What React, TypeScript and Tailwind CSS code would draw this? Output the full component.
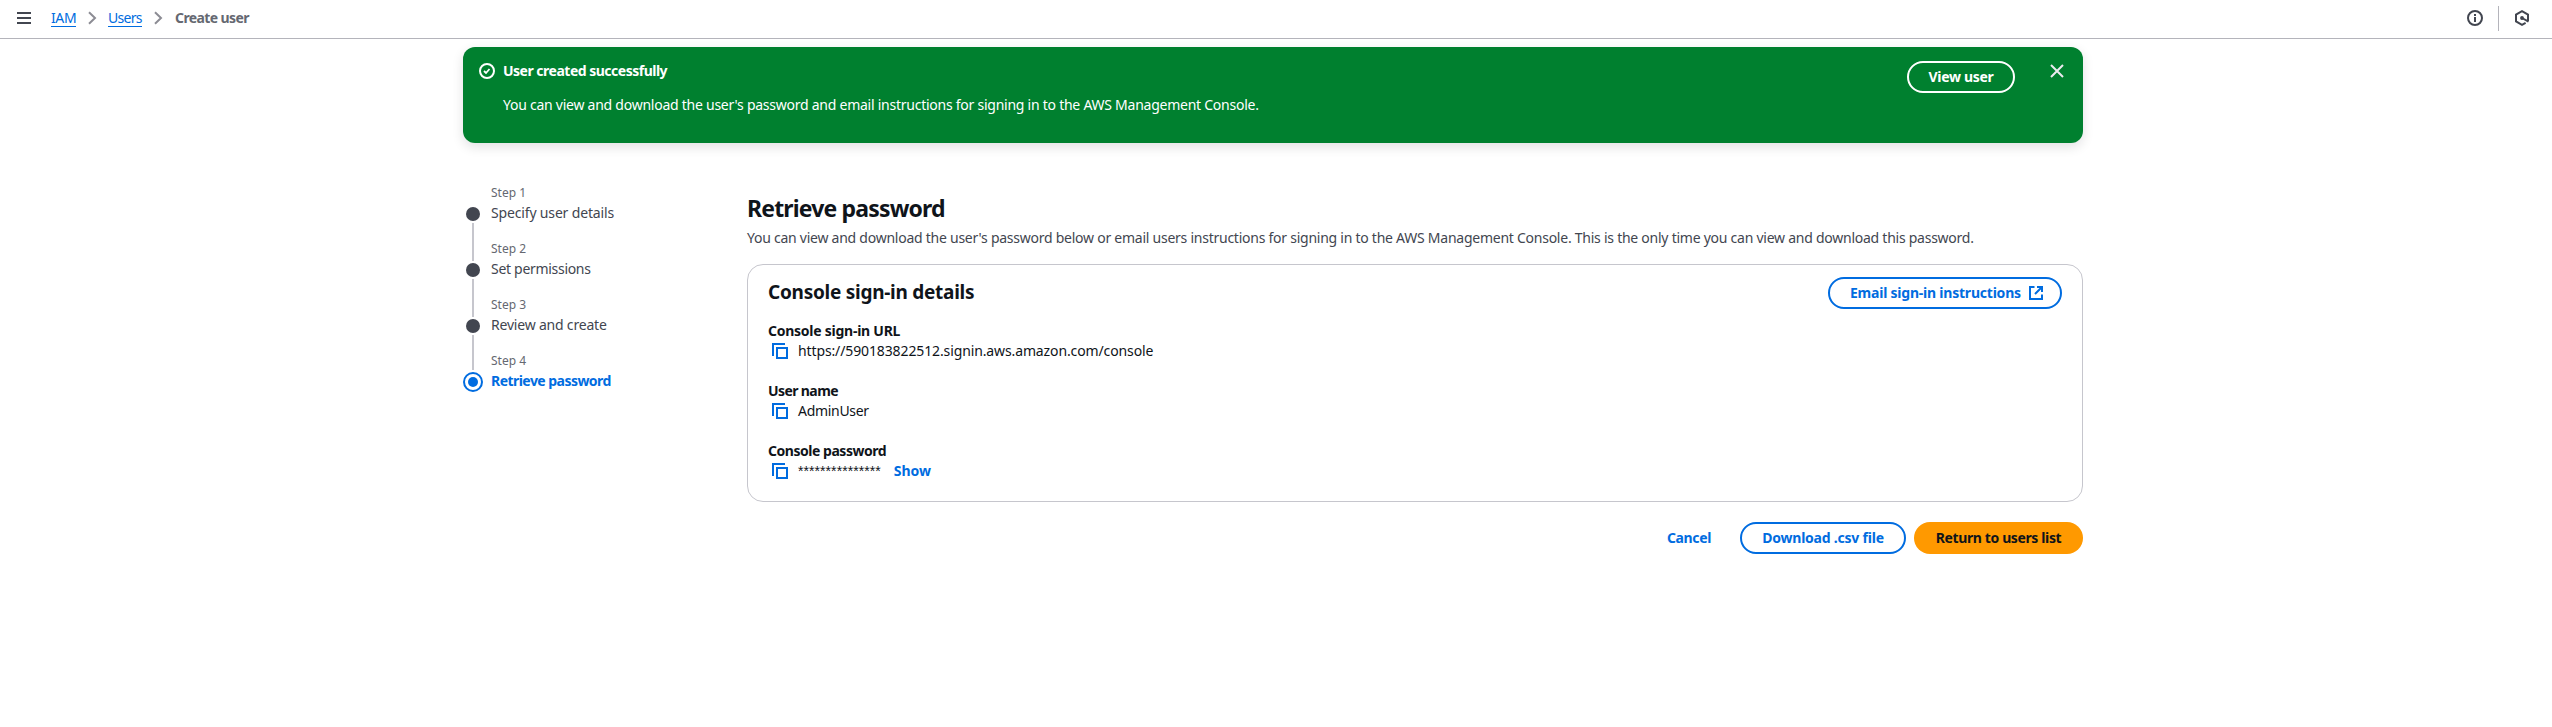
import React from 'react';

const steps = [
  { label: 'Specify user details', tracking: 'tracking-[-0.16px]' },
  { label: 'Set permissions', tracking: 'tracking-[-0.3px]' },
  { label: 'Review and create', tracking: 'tracking-[-0.2px]' },
  { label: 'Retrieve password', tracking: 'tracking-[-0.54px]' },
];

function ChevronIcon() {
  return (
    <svg width="16" height="16" viewBox="0 0 16 16" fill="none" stroke="#8c8c94" strokeWidth="2" className="shrink-0">
      <path d="m5 2.2 6 5.8-6 5.8" />
    </svg>
  );
}

function CopyIcon() {
  return (
    <svg width="16" height="16" viewBox="0 0 16 16" fill="none" stroke="#006ce0" strokeWidth="2" className="ml-1 mr-[10px] shrink-0">
      <path d="M1 13V1h12" />
      <path d="M5 5h10v10H5z" />
    </svg>
  );
}

function Field({ label, labelClass, children }: { label: string; labelClass: string; children: React.ReactNode }) {
  return (
    <div className="flex flex-col">
      <div className={`font-bold ${labelClass}`}>{label}</div>
      <div className="flex h-5 items-center">
        <CopyIcon />
        {children}
      </div>
    </div>
  );
}

export default function App() {
  return (
    <div className="flex min-h-[727px] w-[2552px] flex-col whitespace-nowrap bg-white font-['Noto_Sans',sans-serif] text-[14px] leading-5 text-[#0f141a]">
      <header className="flex h-[39px] items-center border-b border-[#b4b4bb] pb-0.5">
        <svg width="14" height="12" viewBox="0 0 14 12" fill="none" stroke="#424650" strokeWidth="2" className="ml-[17px]">
          <path d="M0 1h14M0 6h14M0 11h14" />
        </svg>
        <nav className="ml-5 flex items-center">
          <a className="w-[25px] border-b border-[#006ce0] text-[#006ce0] leading-[17px] tracking-[-0.4px]">IAM</a>
          <span className="ml-2 mr-2"><ChevronIcon /></span>
          <a className="w-[34px] border-b border-[#006ce0] text-[#006ce0] leading-[17px] tracking-[-0.7px]">Users</a>
          <span className="ml-2 mr-2"><ChevronIcon /></span>
          <span className="ml-px font-bold text-[#656871] tracking-[-0.6px]">Create user</span>
        </nav>
        <div className="ml-auto mr-[22px] flex items-center">
          <svg width="16" height="16" viewBox="0 0 16 16" fill="none" stroke="#424650" strokeWidth="2">
            <circle cx="8" cy="8" r="7" />
            <path d="M8 7v5M8 4v2" />
          </svg>
          <span className="ml-[15px] h-[25px] w-px bg-[#b4b4bb]" />
          <svg width="16" height="16" viewBox="0 0 16 16" fill="none" stroke="#424650" strokeWidth="2" className="ml-[15px]">
            <path d="M14 11V4.5L8 1.2 2 4.5v7l6 3.3 3.6-2" />
            <path d="m8 8 6.5 3.6" />
            <circle cx="8" cy="8" r="1.2" fill="#424650" strokeWidth="1.4" />
          </svg>
        </div>
      </header>

      <main className="mx-auto mt-2 flex w-[1620px] -translate-x-[3px] flex-col">
        <section className="flex h-24 items-start rounded-xl bg-[#00802f] pl-4 text-white shadow-[0_4px_12px_0_rgba(0,7,22,0.12)]">
          <svg width="16" height="16" viewBox="0 0 16 16" fill="none" stroke="currentColor" strokeWidth="2" className="mt-4">
            <circle cx="8" cy="8" r="7" />
            <path d="m5 8 2 2 3.5-4" strokeWidth="1.8" />
          </svg>
          <div className="ml-2 mt-3.5 flex flex-col gap-3.5">
            <div className="font-bold tracking-[-0.5px]">User created successfully</div>
            <div className="tracking-[-0.25px]">You can view and download the user's password and email instructions for signing in to the AWS Management Console.</div>
          </div>
          <button className="ml-auto mt-3.5 h-8 w-[108px] rounded-full border-2 border-white font-bold tracking-[-0.3px]">View user</button>
          <svg width="14" height="14" viewBox="0 0 14 14" fill="none" stroke="#ebebf0" strokeWidth="2" className="ml-[35px] mr-[19px] mt-[17px]">
            <path d="m1 1 12 12M13 1 1 13" />
          </svg>
        </section>

        <div className="mt-[42px] flex items-start">
          <ol className="flex w-[284px] flex-col">
            {steps.map((s, i) => {
              const active = i === steps.length - 1;
              return (
                <li key={s.label} className="flex h-14">
                  <div className="flex w-5 flex-col items-center">
                    {active ? (
                      <span className="mt-[19px] flex size-5 shrink-0 items-center justify-center rounded-full border-2 border-[#006ce0]">
                        <span className="size-2.5 rounded-full bg-[#006ce0]" />
                      </span>
                    ) : (
                      <>
                        <span className="mt-[22px] size-3.5 shrink-0 rounded-full bg-[#424650]" />
                        <span className={i === steps.length - 2 ? 'mt-0.5 h-[35px] w-0.5 shrink-0 bg-[#c6c6cd]' : 'mt-0.5 h-[38px] w-0.5 shrink-0 bg-[#c6c6cd]'} />
                      </>
                    )}
                  </div>
                  <div className="ml-2 flex flex-col gap-0.5">
                    <span className="text-xs leading-4 text-[#656871]">Step {i + 1}</span>
                    <span className={active ? `font-bold text-[#006ce0] ${s.tracking}` : `text-[#424650] ${s.tracking}`}>{s.label}</span>
                  </div>
                </li>
              );
            })}
          </ol>

          <div className="mt-2 flex flex-1 flex-col">
            <h1 className="text-[23px] font-bold leading-[30px] tracking-[-0.83px]">Retrieve password</h1>
            <p className="mt-[5px] tracking-[-0.25px] text-[#424650]">You can view and download the user's password below or email users instructions for signing in to the AWS Management Console. This is the only time you can view and download this password.</p>
            <section className="mt-4 flex h-[238px] flex-col rounded-2xl border border-[#c6c6cd] px-5 pt-3">
              <div className="flex h-8 items-start justify-between">
                <h2 className="mt-[3px] text-[19px] font-bold leading-6 tracking-[-0.26px]">Console sign-in details</h2>
                <button className="flex h-8 w-[234px] items-center rounded-full border-2 border-[#006ce0] pl-5 font-bold tracking-[-0.22px] text-[#006ce0]">
                  Email sign-in instructions
                  <svg width="16" height="16" viewBox="0 0 16 16" fill="none" stroke="currentColor" strokeWidth="2" className="ml-auto mr-[16px]">
                    <path d="M9 2h5v5M14 2 7 9" />
                    <path d="M14 9.5V14H2V2h4.5" />
                  </svg>
                </button>
              </div>
              <div className="mt-3 flex flex-col gap-5">
                <Field label="Console sign-in URL" labelClass="tracking-[-0.25px]">
                  <span className="tracking-[-0.12px]">https://590183822512.signin.aws.amazon.com/console</span>
                </Field>
                <Field label="User name" labelClass="tracking-[-0.6px]">
                  <span className="tracking-[-0.3px]">AdminUser</span>
                </Field>
                <Field label="Console password" labelClass="tracking-[-0.47px]">
                  <span className="font-['Liberation_Sans',sans-serif] tracking-[0.07px]">***************</span>
                  <a className="ml-[13px] font-bold text-[#006ce0]">Show</a>
                </Field>
              </div>
            </section>
            <div className="mt-5 flex h-8 items-center justify-end font-bold">
              <button className="mr-[29px] tracking-[-0.37px] text-[#006ce0]">Cancel</button>
              <button className="h-8 w-[166px] rounded-full border-2 border-[#006ce0] tracking-[-0.22px] text-[#006ce0]">Download .csv file</button>
              <button className="ml-2 h-8 w-[169px] rounded-full bg-[#ff9900] tracking-[-0.38px]">Return to users list</button>
            </div>
          </div>
        </div>
      </main>
    </div>
  );
}
